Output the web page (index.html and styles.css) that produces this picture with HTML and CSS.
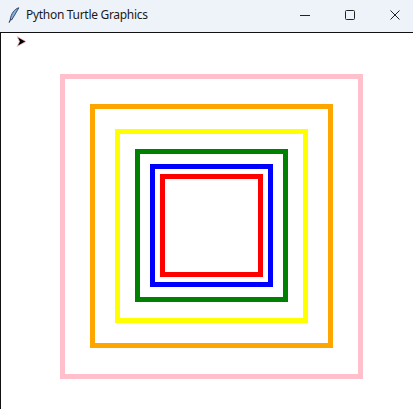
FILE: index.html
```html
<!DOCTYPE html>
<html>
<head>
<meta charset="utf-8">
<link rel="stylesheet" href="styles.css">
</head>
<body>
<div class="window">
  <div class="titlebar">
    <div class="title-left">
      <svg class="feather" width="12" height="16" viewBox="0 0 12 16">
        <path d="M10.8 0.8 C6.5 2 3.2 6.5 2.2 12.5 L3.7 12.9 C5.8 9 8.8 5 10.8 0.8 Z" fill="#7fb2e8" stroke="#2a3b55" stroke-width="0.9"/>
        <path d="M2.6 12.5 L1.2 15.2" stroke="#2a3b55" stroke-width="1.1" stroke-linecap="round"/>
      </svg>
      <span class="title">Python Turtle Graphics</span>
    </div>
    <div class="controls">
      <span class="ctl"><svg width="12" height="12" viewBox="0 0 12 12"><path d="M1 6.5 H11" stroke="#222" stroke-width="1"/></svg></span>
      <span class="ctl"><svg width="12" height="12" viewBox="0 0 12 12"><rect x="1.5" y="1.5" width="9" height="9" rx="1" fill="none" stroke="#222" stroke-width="1"/></svg></span>
      <span class="ctl"><svg width="12" height="12" viewBox="0 0 12 12"><path d="M1.5 1.5 L10.5 10.5 M10.5 1.5 L1.5 10.5" stroke="#222" stroke-width="1"/></svg></span>
    </div>
  </div>
  <div class="canvas">
    <svg class="drawing" width="413" height="377" viewBox="0 32 413 377">
      <g fill="none" stroke-width="5" stroke-linejoin="miter">
        <rect x="62.5" y="76.5" width="298" height="300" stroke="#ffc0cb"/>
        <rect x="92.5" y="106.5" width="238" height="239" stroke="#ffa500"/>
        <rect x="117.5" y="131.5" width="188" height="189" stroke="#ffff00"/>
        <rect x="137.5" y="151.5" width="148" height="148" stroke="#008000"/>
        <rect x="152.5" y="166.5" width="118" height="118" stroke="#0000ff"/>
        <rect x="162.5" y="176.5" width="98" height="98" stroke="#ff0000"/>
      </g>
      <polygon points="26,41.5 17,36.5 19.5,41.5 17,46.5" fill="#000" stroke="#ffc0cb" stroke-width="0.8"/>
    </svg>
  </div>
</div>
</body>
</html>
```
FILE: styles.css
```css
html, body {
  margin: 0;
  padding: 0;
  background: #ffffff;
}
.window {
  width: 413px;
  height: 409px;
  display: flex;
  flex-direction: column;
  overflow: hidden;
}
.titlebar {
  height: 32px;
  flex: 0 0 32px;
  background: #eef3fa;
  display: flex;
  align-items: center;
  justify-content: space-between;
  font-family: "Noto Sans", "Liberation Sans", sans-serif;
  font-size: 12px;
  color: #1a1a1a;
}
.title-left {
  display: flex;
  align-items: center;
  padding-left: 8px;
  gap: 6px;
  margin-top: -3px;
}
.feather {
  display: block;
}
.title {
  letter-spacing: -0.3px;
}
.controls {
  display: flex;
  margin-top: -3px;
  margin-right: -4px;
}
.ctl {
  width: 45px;
  display: flex;
  justify-content: center;
  align-items: center;
}
.ctl svg {
  display: block;
}
.canvas {
  position: relative;
  flex: 1;
  background: #ffffff;
}
.canvas::after {
  content: "";
  position: absolute;
  inset: 0;
  border-top: 1px solid #111;
  border-left: 1px solid #111;
  pointer-events: none;
}
.drawing {
  display: block;
}
```
